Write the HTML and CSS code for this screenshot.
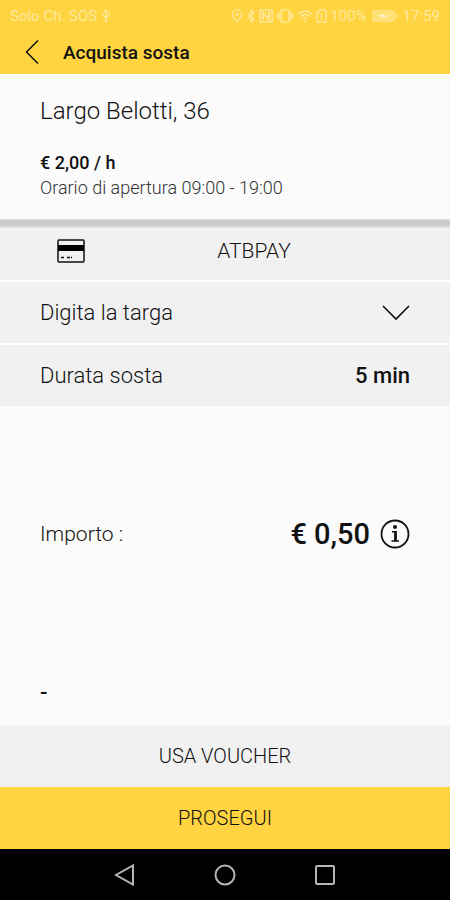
FILE: index.html
```html
<!DOCTYPE html>
<html lang="it">
<head>
  <meta charset="UTF-8">
  <meta name="viewport" content="width=device-width, initial-scale=1.0">
  <title>Acquista sosta</title>
  <link rel="stylesheet" href="styles.css">
</head>
<body>
  <div class="status-bar">
    <span class="carrier">Solo Ch. SOS</span>
    <svg class="usb" width="10" height="14" viewBox="0 0 10 14" fill="none" stroke="currentColor" stroke-width="1.300">
      <path d="M5 1v10M1.500 4v2L5 9M8.500 4v2L5 8.500M3.500 3L5 1l1.500 2"/>
      <circle cx="5" cy="11.500" r="1.500" fill="currentColor" stroke="none"/>
    </svg>
    <div class="status-icons">
      <svg width="12" height="14" viewBox="0 0 12 14" fill="none" stroke="currentColor" stroke-width="1.300">
        <path d="M6 13C4 10 1.200 7.600 1.200 5.300a4.800 4.500 0 0 1 9.600 0C10.800 7.600 8 10 6 13z"/>
        <circle cx="6" cy="5.300" r="1" fill="currentColor"/>
      </svg>
      <svg width="10" height="14" viewBox="0 0 10 14" fill="none" stroke="currentColor" stroke-width="1.300">
        <path d="M1.500 4L8 10l-3 3V1l3 3-6.500 6"/>
      </svg>
      <svg width="14" height="14" viewBox="0 0 14 14" fill="none" stroke="currentColor">
        <rect x="1" y="1" width="12" height="12" stroke-width="1.500"/>
        <path d="M4 11V4l6 6V3" stroke-width="2"/>
      </svg>
      <svg width="18" height="14" viewBox="0 0 18 14" fill="none" stroke="currentColor" stroke-width="1.500">
        <rect x="5" y="1" width="8" height="12" rx="1"/>
        <path d="M3 3v8M15 3v8M1 5v4M17 5v4"/>
      </svg>
      <svg width="16" height="14" viewBox="0 0 16 14" fill="none" stroke="currentColor" stroke-width="1.600">
        <path d="M1 5q7-6 14 0M3 7.500q5-4 10 0M5.500 10q2.500-2 5 0"/>
        <circle cx="8" cy="12" r="1" fill="currentColor" stroke="none"/>
      </svg>
      <svg width="11" height="14" viewBox="0 0 11 14" fill="none" stroke="currentColor" stroke-width="1.500">
        <path d="M4 1h5.500L10 2v11H1V4zM5.500 4.500v4M5.500 9.500V11"/>
      </svg>
      <span>100%</span>
      <svg class="battery" width="26" height="12" viewBox="0 0 26 12">
        <rect x=".5" y=".5" width="22" height="11" rx="2" fill="currentColor" fill-opacity=".6" stroke="currentColor" stroke-opacity=".6"/>
        <path d="M24 4h1.500v4H24z" fill="currentColor"/>
        <path d="M5 6l6-2v1l6 1-6 2V7z" fill="#fff3c8"/>
      </svg>
      <span>17:59</span>
    </div>
  </div>

  <header class="app-bar">
    <button class="icon-button" type="button" aria-label="Indietro">
      <svg width="14" height="26" viewBox="0 0 14 26" fill="none" stroke="currentColor" stroke-width="1.500">
        <path d="M13 1.500L1.500 13 13 24.500"/>
      </svg>
    </button>
    <h1>Acquista sosta</h1>
  </header>

  <main>
    <section class="parking">
      <h2>Largo Belotti, 36</h2>
      <p class="rate">€ 2,00 / h</p>
      <p class="hours">Orario di apertura 09:00 - 19:00</p>
    </section>

    <section class="options">
      <button class="row payment" type="button">
        <svg width="28" height="24" viewBox="0 0 28 24">
          <rect x="1" y="1" width="26" height="22" rx="1" fill="none" stroke="#111" stroke-width="1.500"/>
          <path d="M1 6h26v6H1z" fill="#000"/>
          <path d="M4 18.500h4M10 18.500h5" stroke="#111" stroke-width="1.500" stroke-dasharray="3 1"/>
        </svg>
        <span>ATBPAY</span>
      </button>
      <button class="row" type="button">
        <span>Digita la targa</span>
        <svg width="28" height="16" viewBox="0 0 28 16" fill="none" stroke="#111" stroke-width="1.600">
          <path d="M1 1l13 13L27 1"/>
        </svg>
      </button>
      <button class="row" type="button">
        <span>Durata sosta</span>
        <strong>5 min</strong>
      </button>
    </section>

    <section class="amount">
      <span class="label">Importo :</span>
      <strong>€ 0,50</strong>
      <button class="icon-button" type="button" aria-label="Informazioni">
        <svg width="30" height="30" viewBox="0 0 30 30" fill="none" stroke="#111">
          <circle cx="15" cy="15" r="13.500" stroke-width="1.800"/>
          <circle cx="15" cy="8" r="2" fill="#111" stroke="none"/>
          <path d="M15.500 12v10" stroke-width="2.800"/>
          <path d="M12 12.700h4M11.500 22h7.500" stroke-width="1.500"/>
        </svg>
      </button>
    </section>
    <p class="note">-</p>
  </main>

  <footer class="actions">
    <button class="voucher" type="button">USA VOUCHER</button>
    <button class="proceed" type="button">PROSEGUI</button>
  </footer>

  <nav class="system-nav">
    <button class="icon-button" type="button" aria-label="Back">
      <svg width="22" height="22" viewBox="0 0 22 22"><path d="M19 1.500v19L2 11z"/></svg>
    </button>
    <button class="icon-button" type="button" aria-label="Home">
      <svg width="22" height="22" viewBox="0 0 22 22"><circle cx="11" cy="11" r="9.500"/></svg>
    </button>
    <button class="icon-button" type="button" aria-label="Recenti">
      <svg width="22" height="22" viewBox="0 0 22 22"><rect x="2" y="2" width="18" height="18" rx="1"/></svg>
    </button>
  </nav>
</body>
</html>
```
FILE: styles.css
```css
* {
  box-sizing: border-box;
  margin: 0;
  padding: 0;
}

body {
  min-height: 100vh;
  display: flex;
  flex-direction: column;
  font-family: Roboto, sans-serif;
  font-weight: 300;
  font-size: 22px;
  color: #111;
  background: #fbfbfb;
}

button {
  border: 0;
  background: none;
  font: inherit;
  color: inherit;
  cursor: pointer;
}

svg {
  display: block;
  flex-shrink: 0;
}

.status-bar {
  display: flex;
  align-items: center;
  height: 32px;
  padding: 0 10px;
  background: #ffd440;
  color: #ffe99c;
  font-size: 15px;
  font-weight: 400;
}

.usb {
  margin-left: 4px;
}

.status-icons {
  display: flex;
  align-items: center;
  gap: 3px;
  margin-left: auto;
}

.battery {
  margin: 0 2px;
}

.app-bar {
  display: flex;
  align-items: center;
  gap: 24px;
  height: 42px;
  padding: 0 25px 2px;
  background: #ffd440;
}

.app-bar h1 {
  font-size: 19px;
  font-weight: 500;
}

main {
  flex: 1;
  display: flex;
  flex-direction: column;
}

.parking {
  padding: 22px 40px 19px;
}

.parking h2 {
  margin-bottom: 24px;
  font-size: 24px;
  line-height: 30px;
  font-weight: 300;
}

.rate,
.hours {
  line-height: 25px;
}

.rate {
  font-size: 18px;
  font-weight: 500;
}

.hours {
  font-size: 18px;
  color: #333;
}

.options {
  display: flex;
  flex-direction: column;
  gap: 2px;
  background: #fff;
}

/* shadow strip under the parking details */
.options::before {
  content: "";
  height: 9px;
  margin-bottom: -2px;
  background: linear-gradient(#dedede, #c9c9c9 30%, #cdcdcd 70%, #e6e6e6);
}

.row {
  display: flex;
  align-items: center;
  justify-content: space-between;
  min-height: 61px;
  padding: 0 40px;
  background: #f1f1f1;
}

.row strong {
  font-weight: 500;
}

.payment {
  min-height: 52px;
  padding: 0 57px 6px;
  font-size: 21px;
}

.payment span {
  margin: 0 auto;
  padding-left: 30px;
}

.amount {
  flex: 1;
  display: flex;
  align-items: center;
  gap: 10px;
  padding: 0 40px 18px;
}

.amount .label {
  margin-right: auto;
  font-size: 21px;
}

.amount strong {
  font-size: 29px;
  font-weight: 500;
}

.note {
  padding: 0 40px 20px;
  font-weight: 500;
}

.actions {
  display: flex;
  flex-direction: column;
}

.voucher,
.proceed {
  min-height: 62px;
  font-size: 20px;
}

.voucher {
  background: #f1f1f1;
}

.proceed {
  background: #ffd440;
}

.system-nav {
  display: flex;
  justify-content: center;
  align-items: center;
  gap: 78px;
  height: 51px;
  background: #000;
}

.system-nav svg {
  fill: none;
  stroke: #b5b5b5;
  stroke-width: 2;
}
```
